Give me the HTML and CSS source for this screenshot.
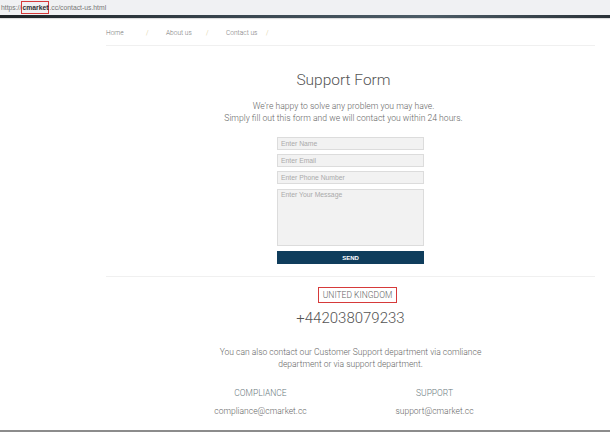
FILE: index.html
```html
<!DOCTYPE html>
<html lang="en">

<head>
    <meta charset="UTF-8">
    <meta name="viewport" content="width=device-width, initial-scale=1.0">
    <title>Contact us</title>
    <link rel="stylesheet" href="styles.css">
</head>

<body>
    <div class="address-bar">
        <span class="url">https://<span class="mark">cmarket</span>.cc/contact-us.html</span>
    </div>
    <div class="top-line"></div>

    <div class="ctn">
        <nav class="crumbs">
            <div class="crumb"><a href="#">Home</a><span class="sep">/</span></div>
            <div class="crumb"><a href="#">About us</a><span class="sep">/</span></div>
            <div class="crumb"><a href="#">Contact us</a><span class="sep">/</span></div>
        </nav>

        <main class="support">
            <h1>Support Form</h1>
            <p class="intro">
                We're happy to solve any problem you may have.<br>
                Simply fill out this form and we will contact you within 24 hours.
            </p>

            <form class="form">
                <input class="input" type="text" placeholder="Enter Name">
                <input class="input" type="email" placeholder="Enter Email">
                <input class="input" type="tel" placeholder="Enter Phone Number">
                <textarea class="input message" placeholder="Enter Your Message"></textarea>
                <button class="submit" type="button">SEND</button>
            </form>
        </main>

        <section class="office">
            <div class="country"><span class="mark">UNITED KINGDOM</span></div>
            <div class="phone">+442038079233</div>
            <p class="note">
                You can also contact our Customer Support department via comliance<br>
                department or via support department.
            </p>
            <div class="depts">
                <div class="dept">
                    <div class="dept-name">COMPLIANCE</div>
                    <div class="dept-mail">compliance@cmarket.cc</div>
                </div>
                <div class="dept">
                    <div class="dept-name">SUPPORT</div>
                    <div class="dept-mail">support@cmarket.cc</div>
                </div>
            </div>
        </section>
    </div>
    <div class="bottom-line"></div>
</body>

</html>
```

FILE: styles.css
```css
body {
    margin: 0;
    padding: 0;
    font-family: Roboto, "Liberation Sans", sans-serif;
    font-weight: 300;
    color: #666;
    background-color: #fff;
    height: 432px;
    overflow: hidden;
    position: relative;
}

.address-bar {
    height: 15px;
    background-color: #f0f1f3;
    display: flex;
    align-items: center;
    padding-left: 1px;
}

.url {
    font-family: "Liberation Sans", sans-serif;
    font-weight: 400;
    font-size: 6.8px;
    color: #777;
}

.url .mark {
    color: #333;
    font-weight: 700;
    padding: 2px 0;
}

.mark {
    border: 1px solid #d63a3a;
    padding: 2px 1px;
}

.top-line {
    height: 3px;
    background: linear-gradient(to right, #1e2326, #3a4750 40%, #4c5c66 70%, #2a3238);
    box-shadow: 0 1px 1px rgba(0, 0, 0, 0.15);
}

.ctn {
    margin-left: 106px;
    width: 489px;
}

.crumbs {
    display: flex;
    align-items: center;
    font-size: 6.6px;
    padding-top: 10px;
    height: 10px;
    padding-bottom: 7px;
    border-bottom: 1px solid #f0f0f0;
}

.crumb {
    display: flex;
    width: 60px;
}

.crumbs a {
    width: 40px;
    color: #777;
    text-decoration: none;
}

.sep {
    color: #d8c98a;
}

.support {
    text-align: center;
    padding-bottom: 12px;
    border-bottom: 1px solid #f0f0f0;
}

h1 {
    font-size: 15.5px;
    font-weight: 300;
    color: #555;
    margin: 24px 0 0;
    padding-right: 14px;
    line-height: 20px;
}

.intro {
    font-size: 8.6px;
    line-height: 12px;
    margin: 10px 0 0;
    padding-right: 14px;
    color: #666;
}

.form {
    width: 147px;
    margin: 13px auto 0;
    display: flex;
    flex-direction: column;
    gap: 4px;
}

.input {
    box-sizing: border-box;
    height: 13px;
    padding: 1px 3px;
    border: 1px solid #dcdcdc;
    background-color: #f2f2f2;
    font-family: "Liberation Sans", sans-serif;
    font-size: 6.8px;
    color: #555;
    outline: none;
}

.input::placeholder {
    color: #aaa;
}

.message {
    height: 57px;
    resize: none;
    margin-top: 1px;
}

.submit {
    height: 13px;
    margin-top: 1px;
    border: none;
    background-color: #0f3d5c;
    color: #fff;
    font-family: "Liberation Sans", sans-serif;
    font-weight: 700;
    font-size: 6px;
    padding: 0;
}

.office {
    text-align: center;
}

.country {
    margin-top: 12px;
    padding-left: 14px;
    font-size: 8.5px;
    color: #666;
    line-height: 12px;
}

.country .mark {
    padding: 2px 4px;
}

.phone {
    font-size: 15px;
    color: #555;
    margin-top: 7px;
    line-height: 20px;
}

.note {
    font-size: 8.5px;
    line-height: 12px;
    margin: 18px 0 0;
    color: #666;
}

.depts {
    display: flex;
    justify-content: space-between;
    width: 345px;
    margin: 17px 0 0 69px;
}

.dept {
    width: 171px;
    text-align: center;
}

.dept-name {
    font-size: 8.5px;
    color: #6a7a80;
    line-height: 12px;
}

.dept-mail {
    font-size: 8.5px;
    margin-top: 6px;
    line-height: 12px;
}

.bottom-line {
    position: absolute;
    left: 0;
    right: 0;
    bottom: 0;
    height: 2px;
    background-color: #8c8c8c;
}
```
